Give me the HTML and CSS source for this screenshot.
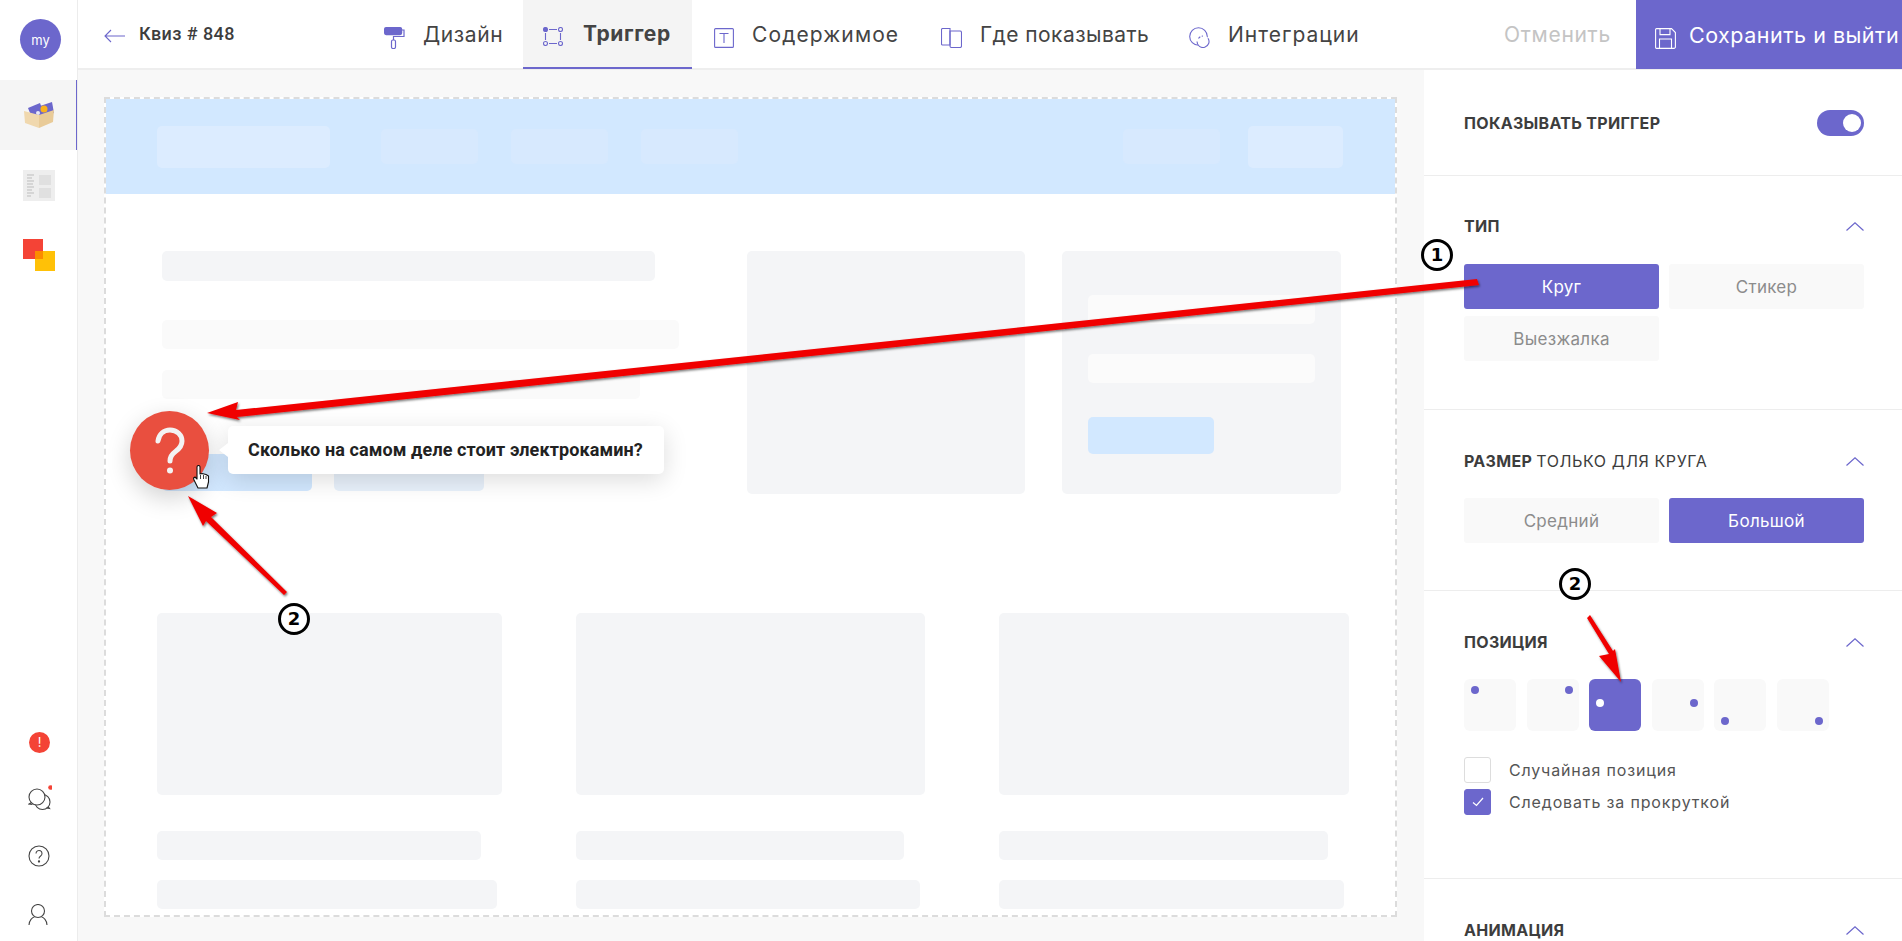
FILE: index.html

```html
<!DOCTYPE html>
<html>
<head>
  <meta charset="utf-8" />
  <meta name="viewport" content="width=device-width, initial-scale=1" />
  <title>Квиз # 848</title>
  <link rel="stylesheet" href="styles.css">
</head>
<body>
  <aside class="sidebar">
    <div class="avatar">my</div>
    <a class="side-item active">
      <svg width="32" height="28" viewBox="0 0 32 28">
        <polygon points="5,7 17,2 21,13 9,17" fill="#6c67cc"/>
        <polygon points="14,6 29,1 31,12 18,16" fill="#6c67cc"/>
        <circle cx="21" cy="8" r="3.5" fill="#f9b21d"/>
        <circle cx="15" cy="12" r="2" fill="#e8e8f6"/>
        <polygon points="1,10 16,14 16,27 2,22" fill="#f0d8ae"/>
        <polygon points="16,14 31,9 30,21 16,27" fill="#e9cb98"/>
      </svg>
    </a>
    <a class="side-item">
      <svg width="32" height="31" viewBox="0 0 32 31">
        <rect width="32" height="31" fill="#eeeeee"/>
        <path d="M4 5h7M4 8h5M4 11h7M4 14h6M4 17h7M4 20h5M4 23h7M4 26h4" stroke="#bdbdbd" stroke-width="1"/>
        <rect x="16" y="5" width="12" height="10" fill="#e0e0e0"/>
        <rect x="16" y="18" width="12" height="10" fill="#e0e0e0"/>
      </svg>
    </a>
    <a class="side-item">
      <svg width="32" height="32" viewBox="0 0 32 32">
        <rect x="0" y="0" width="20" height="20" fill="#f44336"/>
        <rect x="12" y="12" width="20" height="20" fill="#ffc107"/>
        <rect x="12" y="12" width="8" height="8" fill="#fb8c00"/>
      </svg>
    </a>
    <div class="side-bottom">
      <div class="alert-dot">!</div>
      <svg class="side-icon chat" width="24" height="26" viewBox="0 0 24 26" fill="#fff" stroke="#444" stroke-width="1.1">
        <circle cx="14.500" cy="17" r="7.500"/>
        <path d="M20 21.500l1.500 2-3-.6" fill="none"/>
        <circle cx="9" cy="12" r="8"/>
        <path d="M3.500 17.500l-2.500 1.500 3.500.4" fill="none"/>
        <circle cx="22.500" cy="2.500" r="2.300" fill="#f44336" stroke="none"/>
      </svg>
      <svg class="side-icon help" width="22" height="22" viewBox="0 0 22 22" fill="none" stroke="#444" stroke-width="1.1">
        <circle cx="11" cy="11" r="10"/>
        <path d="M8 8.500a3 3 0 1 1 4.600 2.500c-1 .7-1.600 1.300-1.600 2.600"/>
        <circle cx="11" cy="16.500" r=".6" fill="#444"/>
      </svg>
      <svg class="side-icon user" width="20" height="22" viewBox="0 0 20 22" fill="none" stroke="#444" stroke-width="1.1">
        <circle cx="10" cy="7" r="6.500"/>
        <path d="M1 21c0-4.500 3.500-8 5.500-8M19 21c0-4.500-3.500-8-5.500-8"/>
      </svg>
    </div>
  </aside>

  <div class="main">
    <header class="topbar">
      <div class="back">
        <svg width="22" height="14" viewBox="0 0 22 14" fill="none" stroke="#6c67cc" stroke-width="1.1"><path d="M21 7H1M7 1L1 7l6 6"/></svg>
        <span>Квиз # 848</span>
      </div>
      <nav class="tabs">
        <a class="tab tab-design">
          <svg width="21" height="22" viewBox="0 0 21 22" fill="none" stroke="#6c67cc" stroke-width="1.2">
            <rect x=".6" y=".6" width="17" height="7" rx="1.500" fill="#6c67cc"/>
            <path d="M18 3h2v6.500h-10.500v3.500"/>
            <rect x="7.500" y="13" width="4" height="8.500" rx="1.500"/>
          </svg>
          Дизайн
        </a>
        <a class="tab tab-trigger current">
          <svg width="20" height="19" viewBox="0 0 20 19" fill="none" stroke="#6c67cc" stroke-width="1.1">
            <circle cx="2.500" cy="2.500" r="2" fill="#6c67cc"/><circle cx="17.500" cy="2.500" r="2"/>
            <circle cx="2.500" cy="16.500" r="2"/><circle cx="17.500" cy="16.500" r="2"/>
            <path d="M6 2.500h8M6 16.500h8M2.500 6v7M17.500 6v7"/>
          </svg>
          Триггер
        </a>
        <a class="tab tab-content">
          <svg width="20" height="20" viewBox="0 0 20 20" fill="none" stroke="#6c67cc" stroke-width="1.1">
            <rect x=".6" y=".6" width="18.800" height="18.800" rx="1"/>
            <path d="M5.500 5.500h9M10 5.500v9.500"/>
          </svg>
          Содержимое
        </a>
        <a class="tab tab-where">
          <svg width="21" height="20" viewBox="0 0 21 20" fill="none" stroke="#6c67cc" stroke-width="1.1">
            <path d="M9 17H1.500a1 1 0 0 1-1-1V1.500a1 1 0 0 1 1-1H9z"/>
            <path d="M9 3h10a1.500 1.500 0 0 1 1.500 1.500V18a1.500 1.500 0 0 1-1.500 1.500h-8.500A1.500 1.500 0 0 1 9 18z"/>
          </svg>
          Где показывать
        </a>
        <a class="tab tab-integr">
          <svg width="21" height="21" viewBox="0 0 21 21" fill="none" stroke="#6c67cc" stroke-width="1.1">
            <circle cx="9.500" cy="9.500" r="8.800"/>
            <circle cx="14" cy="14.500" r="6" fill="#fff" stroke="none"/>
            <path d="M19 11.200A6 6 0 1 1 8 14.500"/>
            <path d="M9.500 11.500a5.500 5.500 0 0 1 4.500-2.500" stroke-dasharray="2.500 1.500"/>
          </svg>
          Интеграции
        </a>
      </nav>
      <a class="cancel">Отменить</a>
      <a class="save">
        <svg width="21" height="21" viewBox="0 0 21 21" fill="none" stroke="#fff" stroke-width="1.1">
          <path d="M1.500.6h15l3.900 3.900v14.400a1.500 1.500 0 0 1-1.500 1.500H1.500A1 1 0 0 1 .6 19.400V1.500A1 1 0 0 1 1.500.6z"/>
          <path d="M5 .6v6h10v-6M4.500 20.400v-9.400h12v9.400"/>
        </svg>
        Сохранить и выйти
      </a>
    </header>

    <div class="workspace">
      <section class="canvas">
        <div class="preview">
          <div class="fake-header">
            <div class="fake-logo"></div>
            <div class="fake-link first"></div>
            <div class="fake-link"></div>
            <div class="fake-link"></div>
            <div class="fake-link push"></div>
            <div class="fake-logo small"></div>
          </div>
          <div class="fake-hero">
            <div class="hero-text">
              <div class="sk sk-title"></div>
              <div class="sk sk-line one"></div>
              <div class="sk sk-line two"></div>
              <div class="hero-btns">
                <div class="hero-btn"></div>
                <div class="hero-btn alt"></div>
              </div>
            </div>
            <div class="hero-card"></div>
            <div class="hero-card form">
              <div class="form-field"></div>
              <div class="form-field"></div>
              <div class="form-btn"></div>
            </div>
          </div>
          <div class="fake-cols">
            <div class="fake-col">
              <div class="sk sk-card"></div>
              <div class="sk sk-row short"></div>
              <div class="sk sk-row"></div>
            </div>
            <div class="fake-col">
              <div class="sk sk-card"></div>
              <div class="sk sk-row short"></div>
              <div class="sk sk-row"></div>
            </div>
            <div class="fake-col">
              <div class="sk sk-card"></div>
              <div class="sk sk-row short"></div>
              <div class="sk sk-row"></div>
            </div>
          </div>

          <div class="trigger">
            <svg width="30" height="48" viewBox="0 0 30 48" fill="none" stroke="#f3f3f3" stroke-width="5" stroke-linecap="round">
              <path d="M3 14C4 7 9 3 15 3c7 0 12 5 12 11 0 5-3 8-6.500 10.500C17 27 15 29 15 34"/>
              <circle cx="15" cy="43.500" r="3" fill="#f3f3f3" stroke="none"/>
            </svg>
            <svg class="hand" width="17" height="24" viewBox="0 0 17 24">
              <path d="M4 2a1.500 1.500 0 0 1 3 0v7l2-.5 2 .5 2 .5 2.500 1.500V17l-1.500 6H5l-4-8-.5-2 1.500-1 2 2z" fill="#fff" stroke="#111" stroke-width="1.100" stroke-linejoin="round"/>
              <path d="M7.500 10v4M10.500 10v4M13 11v3" stroke="#111" stroke-width=".8"/>
            </svg>
          </div>
          <div class="bubble">Сколько на самом деле стоит электрокамин?</div>
        </div>
      </section>

      <aside class="panel">
        <div class="group group-show">
          <h3 class="group-title">Показывать триггер</h3>
          <div class="toggle"></div>
        </div>
        <div class="group group-type">
          <div class="group-head">
            <h3 class="group-title">Тип</h3>
            <svg class="chev" width="18" height="9" viewBox="0 0 18 9" fill="none" stroke="#6c67cc" stroke-width="1.2"><path d="M.5 8.500L9 .8l8.500 7.700"/></svg>
          </div>
          <div class="options">
            <a class="opt on">Круг</a>
            <a class="opt">Стикер</a>
            <a class="opt">Выезжалка</a>
          </div>
        </div>
        <div class="group group-size">
          <div class="group-head">
            <h3 class="group-title">Размер <small>только для круга</small></h3>
            <svg class="chev" width="18" height="9" viewBox="0 0 18 9" fill="none" stroke="#6c67cc" stroke-width="1.2"><path d="M.5 8.500L9 .8l8.500 7.700"/></svg>
          </div>
          <div class="options">
            <a class="opt">Средний</a>
            <a class="opt on">Большой</a>
          </div>
        </div>
        <div class="group group-pos">
          <div class="group-head">
            <h3 class="group-title">Позиция</h3>
            <svg class="chev" width="18" height="9" viewBox="0 0 18 9" fill="none" stroke="#6c67cc" stroke-width="1.2"><path d="M.5 8.500L9 .8l8.500 7.700"/></svg>
          </div>
          <div class="tiles">
            <div class="tile tl"></div>
            <div class="tile tr"></div>
            <div class="tile ml on"></div>
            <div class="tile mr"></div>
            <div class="tile bl"></div>
            <div class="tile br"></div>
          </div>
          <label class="check"><span class="box"></span>Случайная позиция</label>
          <label class="check"><span class="box on">
            <svg width="12" height="10" viewBox="0 0 12 10" fill="none" stroke="#fff" stroke-width="1.200"><path d="M1 5.500l3.500 3L11 1"/></svg>
          </span>Следовать за прокруткой</label>
        </div>
        <div class="group group-anim">
          <div class="group-head">
            <h3 class="group-title">Анимация</h3>
            <svg class="chev" width="18" height="9" viewBox="0 0 18 9" fill="none" stroke="#6c67cc" stroke-width="1.2"><path d="M.5 8.500L9 .8l8.500 7.700"/></svg>
          </div>
        </div>
      </aside>
    </div>
  </div>

  <!-- annotations on top of the screenshot -->
  <svg class="arrows" width="1902" height="941" viewBox="0 0 1902 941">
    <defs>
      <filter id="arrow-shadow" x="-5%" y="-20%" width="110%" height="140%">
        <feDropShadow dx="1" dy="1.500" stdDeviation="1" flood-color="#000" flood-opacity=".55"/>
      </filter>
    </defs>
    <g fill="#f00000" filter="url(#arrow-shadow)">
      <polygon points="207,413 238,402 236,410 1477,279 1479,285 237,417 240,420"/>
      <polygon points="188,496 217,513 211,517 287,592 284,595 206,521 203,526"/>
      <polygon points="1621,682 1599,656 1609,654 1587,618 1590,615 1613,651 1615,649"/>
    </g>
  </svg>
  <div class="mark mark-one">1</div>
  <div class="mark mark-two">2</div>
  <div class="mark mark-three">2</div>
</body>
</html>
```

FILE: styles.css

```css
* {
  box-sizing: border-box;
}
html,
body {
  height: 100%;
}
body {
  margin: 0;
  display: flex;
  font-family: Inter, "Open Sans", sans-serif;
  color: #444;
  background: #fff;
  overflow: hidden;
}

/* left rail */
.sidebar {
  width: 78px;
  flex-shrink: 0;
  display: flex;
  flex-direction: column;
  border-right: 1px solid #ececec;
  background: #fff;
}
.avatar {
  width: 41px;
  height: 41px;
  margin: 19px 0 20px 20px;
  border-radius: 50%;
  background: #6c67cc;
  color: #fff;
  font-size: 13px;
  display: flex;
  align-items: center;
  justify-content: center;
}
.side-item {
  height: 70px;
  width: 77px;
  display: flex;
  align-items: center;
  padding-left: 23px;
}
.side-item.active {
  background: #f5f5f5;
  border-right: 1px solid #6c67cc;
}
.side-bottom {
  margin-top: auto;
  height: 209px;
  padding: 0 0 0 28px;
  display: flex;
  flex-direction: column;
}
.alert-dot {
  width: 21px;
  height: 21px;
  margin-left: 1px;
  border-radius: 50%;
  background: #f44336;
  color: #fff;
  font-size: 13px;
  line-height: 21px;
  text-align: center;
}
.side-icon {
  flex-shrink: 0;
}
.side-icon.chat {
  margin-top: 32px;
}
.side-icon.help {
  margin-top: 34px;
}
.side-icon.user {
  margin-top: 37px;
}

.main {
  flex: 1;
  min-width: 0;
  display: flex;
  flex-direction: column;
}

/* top bar */
.topbar {
  height: 70px;
  flex-shrink: 0;
  display: flex;
  align-items: stretch;
  border-bottom: 2px solid #eee;
  background: #fff;
  position: relative;
}
.back {
  width: 306px;
  padding-left: 26px;
  display: flex;
  align-items: center;
  gap: 13px;
  font-family: Roboto, sans-serif;
  font-weight: 500;
  font-size: 18px;
  letter-spacing: .4px;
  color: #3d3d3d;
  padding-bottom: 1px;
}
.back svg {
  margin-top: 5px;
}
.tabs {
  width: 1252px;
  display: flex;
}
.tab {
  display: flex;
  align-items: center;
  height: 69px;
  font-size: 21px;
  letter-spacing: .6px;
  color: #444;
  white-space: nowrap;
  padding-bottom: 1px;
}
.tab svg {
  flex-shrink: 0;
  margin-right: 18px;
  margin-top: 7px;
}
.tab-design {
  width: 139px;
}
.tab-trigger {
  width: 169px;
  padding-left: 20px;
  font-weight: 700;
  background: #f4f4f4;
  border-bottom: 2px solid #6c67cc;
  margin-right: 22px;
}
.tab-trigger svg {
  margin-right: 20px;
}
.tab-content {
  width: 227px;
  letter-spacing: 1.1px;
}
.tab-where {
  width: 248px;
  letter-spacing: .45px;
}
.tab-integr {
  letter-spacing: 1px;
}
.cancel {
  position: absolute;
  left: 1426px;
  top: 0;
  height: 69px;
  display: flex;
  align-items: center;
  font-size: 21px;
  letter-spacing: .7px;
  color: #c4c4c4;
}
.save {
  position: absolute;
  right: 0;
  top: 0;
  width: 266px;
  height: 69px;
  padding-left: 19px;
  display: flex;
  align-items: center;
  gap: 13px;
  background: #6c67cc;
  color: #fff;
  font-size: 21.500px;
  letter-spacing: .5px;
  white-space: nowrap;
  overflow: hidden;
}
.save svg {
  flex-shrink: 0;
  margin-top: 7px;
}

.workspace {
  flex: 1;
  min-height: 0;
  display: flex;
}

/* fake site preview */
.canvas {
  flex: 1;
  min-width: 0;
  background: #f8f8f8;
  padding: 27px 27px 0 26px;
}
.preview {
  height: 820px;
  border: 2px dashed #dcdcdc;
  background: #fff;
  position: relative;
  overflow: hidden;
}
.fake-header {
  height: 95px;
  background: #d2e8ff;
  display: flex;
  align-items: center;
  padding: 0 52px 0 51px;
}
.fake-logo {
  width: 173px;
  height: 42px;
  background: #dcecff;
  border-radius: 5px;
}
.fake-logo.small {
  width: 95px;
  margin-left: 28px;
}
.fake-link {
  width: 97px;
  height: 35px;
  margin-left: 33px;
  background: #d7e9fe;
  border-radius: 5px;
}
.fake-link.first {
  margin-left: 51px;
}
.fake-link.push {
  margin-left: auto;
}
.fake-hero {
  display: flex;
  padding: 57px 0 0 56px;
  height: 300px;
}
.hero-text {
  width: 585px;
}
.sk {
  border-radius: 5px;
  background: #f4f5f7;
}
.sk-title {
  width: 493px;
  height: 30px;
}
.sk-line {
  height: 29px;
  background: #fafafa;
}
.sk-line.one {
  width: 517px;
  margin-top: 39px;
}
.sk-line.two {
  width: 478px;
  margin-top: 21px;
}
.hero-btns {
  display: flex;
  gap: 22px;
  margin-top: 55px;
}
.hero-btn {
  width: 150px;
  height: 37px;
  border-radius: 0 0 5px 5px;
  background: #d2e8ff;
}
.hero-btn.alt {
  background: #e8f1fb;
}
.hero-card {
  width: 278px;
  height: 243px;
  margin-right: 37px;
  border-radius: 5px;
  background: #f4f5f7;
}
.hero-card.form {
  width: 279px;
  margin-right: 0;
  padding: 44px 26px 0 26px;
}
.form-field {
  height: 29px;
  margin-bottom: 30px;
  background: #fbfbfb;
  border-radius: 5px;
}
.form-btn {
  width: 126px;
  height: 37px;
  margin-top: 34px;
  background: #d2e8ff;
  border-radius: 5px;
}
.fake-cols {
  display: grid;
  grid-template-columns: 345px 349px 350px;
  column-gap: 74px;
  padding: 119px 0 0 51px;
}
.fake-col {
  display: flex;
  flex-direction: column;
}
.sk-card {
  height: 182px;
  margin-bottom: 36px;
}
.sk-row {
  height: 29px;
  margin-bottom: 20px;
  width: 98.500%;
}
.sk-row.short {
  width: 94%;
}

/* trigger over the preview */
.trigger {
  position: absolute;
  left: 24px;
  top: 312px;
  width: 79px;
  height: 79px;
  border-radius: 50%;
  background: #e94f3f;
  box-shadow: 0 8px 24px rgba(0, 0, 0, .18);
  display: flex;
  align-items: center;
  justify-content: center;
}
.hand {
  position: absolute;
  left: 63px;
  top: 54px;
}
.bubble {
  position: absolute;
  left: 122px;
  top: 327px;
  width: 436px;
  height: 48px;
  padding-left: 20px;
  border-radius: 5px;
  background: #fff;
  box-shadow: 0 6px 24px rgba(0, 0, 0, .14);
  font-family: Roboto, sans-serif;
  font-weight: 700;
  font-size: 18px;
  line-height: 47px;
  letter-spacing: .1px;
  color: #222;
  white-space: nowrap;
}
.bubble::before {
  content: "";
  position: absolute;
  left: -9px;
  top: 17px;
  border-style: solid;
  border-width: 7px 9px 7px 0;
  border-color: transparent #fff transparent transparent;
}

/* settings panel */
.panel {
  width: 478px;
  flex-shrink: 0;
  background: #fff;
}
.group {
  padding: 0 38px 0 40px;
  border-bottom: 1px solid #ededed;
}
.group-show {
  height: 106px;
  display: flex;
  align-items: center;
  justify-content: space-between;
}
.group-type {
  height: 234px;
  padding-top: 40px;
}
.group-size {
  height: 181px;
  padding-top: 41px;
}
.group-pos {
  height: 288px;
  padding-top: 41px;
}
.group-anim {
  border-bottom: 0;
  padding-top: 41px;
}
.group-title {
  margin: 0;
  font-size: 16px;
  font-weight: 700;
  line-height: 20px;
  letter-spacing: .3px;
  text-transform: uppercase;
  color: #3d3d3d;
}
.group-title small {
  font-size: 16px;
  font-weight: 400;
  letter-spacing: .6px;
}
.group-head {
  display: flex;
  align-items: center;
  justify-content: space-between;
  margin-bottom: 27px;
}
.toggle {
  width: 47px;
  height: 26px;
  border-radius: 13px;
  background: #6c67cc;
  position: relative;
}
.toggle::after {
  content: "";
  position: absolute;
  right: 3px;
  top: 4px;
  width: 18px;
  height: 18px;
  border-radius: 50%;
  background: #fff;
}
.options {
  display: grid;
  grid-template-columns: repeat(2, 195px);
  gap: 7px 10px;
}
.group-type .options {
  margin-top: 28px;
}
.opt {
  height: 45px;
  border-radius: 3px;
  background: #f9f9f9;
  color: #8c8c8c;
  font-size: 17px;
  letter-spacing: .3px;
  display: flex;
  align-items: center;
  justify-content: center;
}
.opt.on {
  background: #6c67cc;
  color: #fff;
}
.tiles {
  display: flex;
  gap: 10.500px;
  margin-bottom: 25px;
}
.tile {
  width: 52px;
  height: 52px;
  border-radius: 6px;
  background: #f9f9f9;
  position: relative;
}
.tile.on {
  background: #6c67cc;
}
.tile::after {
  content: "";
  position: absolute;
  width: 8px;
  height: 8px;
  border-radius: 50%;
  background: #6c67cc;
}
.tile.on::after {
  background: #fff;
}
.tile.tl::after {
  left: 7px;
  top: 7px;
}
.tile.tr::after {
  right: 6px;
  top: 7px;
}
.tile.ml::after {
  left: 7px;
  top: 20px;
}
.tile.mr::after {
  right: 6px;
  top: 20px;
}
.tile.bl::after {
  left: 7px;
  bottom: 6px;
}
.tile.br::after {
  right: 6px;
  bottom: 6px;
}
.check {
  display: flex;
  align-items: center;
  height: 27px;
  margin-bottom: 5px;
  font-size: 16px;
  letter-spacing: .85px;
  color: #555;
}
.box {
  width: 27px;
  height: 26px;
  margin-right: 18px;
  border: 1px solid #ddd;
  border-radius: 3px;
  display: flex;
  align-items: center;
  justify-content: center;
}
.box.on {
  background: #6c67cc;
  border-color: #6c67cc;
}

/* annotations */
.arrows {
  position: absolute;
  left: 0;
  top: 0;
  pointer-events: none;
}
.mark {
  position: absolute;
  width: 32px;
  height: 32px;
  border: 3.500px solid #000;
  border-radius: 50%;
  background: #fff;
  color: #000;
  font-family: "DejaVu Sans", sans-serif;
  font-weight: 700;
  font-size: 18px;
  line-height: 25px;
  text-align: center;
}
.mark-one {
  left: 1421px;
  top: 239px;
}
.mark-two {
  left: 278px;
  top: 603px;
}
.mark-three {
  left: 1559px;
  top: 568px;
}
```
